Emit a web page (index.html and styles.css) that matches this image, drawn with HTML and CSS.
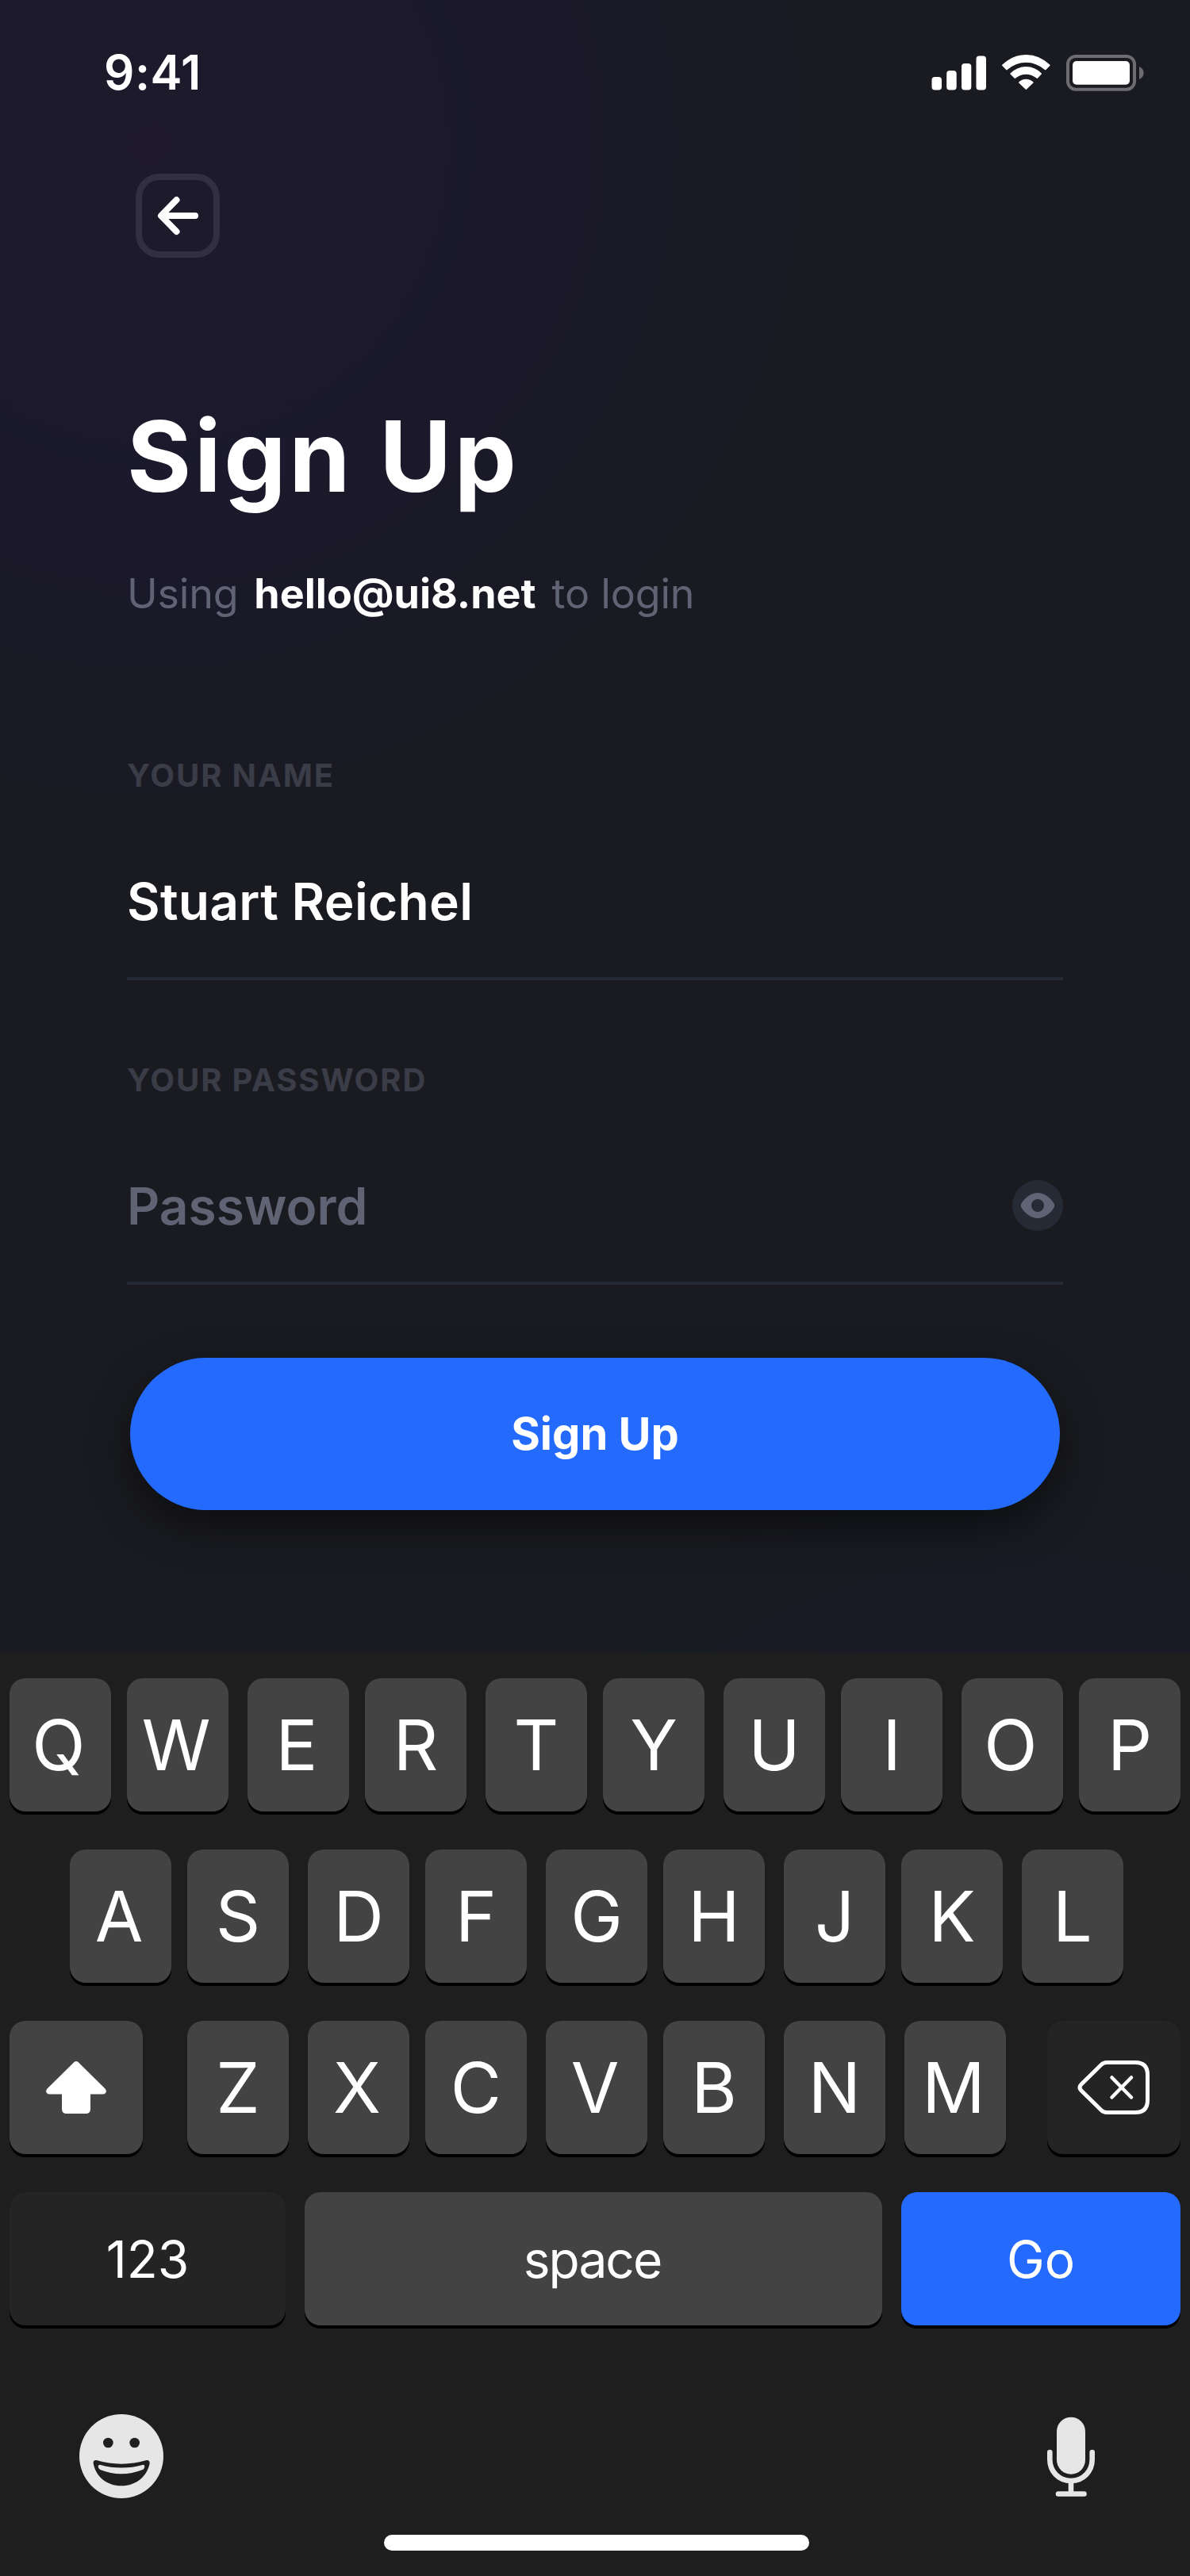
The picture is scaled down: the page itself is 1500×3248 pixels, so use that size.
FILE: index.html
```html
<!DOCTYPE html>
<html lang="en">
<head>
<meta charset="utf-8">
<title>Sign Up</title>
<link rel="stylesheet" href="styles.css">
</head>
<body>
<div class="screen">
  <header class="status">
    <span class="time">9:41</span>
    <div class="status-icons">
      <svg width="70" height="48" viewBox="0 0 70 48" fill="#fff">
        <rect x="0.5" y="29" width="12.5" height="16.5" rx="4"/>
        <rect x="19.2" y="21" width="12.5" height="24.5" rx="4"/>
        <rect x="38" y="12" width="12.3" height="33.5" rx="4"/>
        <rect x="56.5" y="2.5" width="12.5" height="43" rx="4"/>
      </svg>
      <svg width="64" height="48" viewBox="366 84 192 144" fill="#fff" stroke="#fff" stroke-width="4" stroke-linejoin="round">
        <path d="M371 127Q410 89 460 89T549 127L533 143Q500 114 460 114T387 143Z"/>
        <path d="M402 159Q427 134 460 134T517 159L502 175Q483 159 460 159T418 175Z"/>
        <path d="M434 192Q445 181 460 181T486 192L460 217Z"/>
      </svg>
      <svg width="98" height="48" viewBox="0 0 98 48">
        <rect x="2" y="3" width="84" height="41.7" rx="10" fill="none" stroke="#6c6c71" stroke-width="4"/>
        <rect x="8" y="9" width="72" height="29.7" rx="5" fill="#fff"/>
        <path d="M92 16C99.500 19 99.500 29 92 32Z" fill="#6c6c71"/>
      </svg>
    </div>
  </header>

  <main class="content">
    <button class="back" aria-label="Back">
      <svg width="56" height="52" viewBox="0 0 56 52" fill="none" stroke="#fff" stroke-width="8" stroke-linecap="round" stroke-linejoin="round">
        <path d="M50 26H8M26.500 6L7 26L26.500 46"/>
      </svg>
    </button>
    <h1 class="title">Sign Up</h1>
    <p class="subtitle"><span>Using</span><strong class="email">hello@ui8.net</strong><span>to login</span></p>

    <section class="field">
      <div class="label">YOUR NAME</div>
      <div class="value filled">Stuart Reichel</div>
    </section>
    <section class="field">
      <div class="label">YOUR PASSWORD</div>
      <div class="value placeholder"><span>Password</span>
        <svg class="eye" width="64" height="64" viewBox="0 0 64 64">
          <circle cx="32" cy="32" r="32" fill="#262a34"/>
          <path d="M32 16C44 16 53.300 28.500 53.300 32S44 48 32 48S10.700 35.500 10.700 32S20 16 32 16Z" fill="#606374"/>
          <circle cx="32" cy="32" r="8" fill="#262a34"/>
        </svg>
      </div>
    </section>
    <button class="submit">Sign Up</button>
  </main>

  <footer class="keyboard">
    <div class="row top">
      <span class="key lean">Q</span><span class="key lean">W</span><span class="key lean">E</span><span class="key">R</span><span class="key">T</span><span class="key">Y</span><span class="key">U</span><span class="key">I</span><span class="key lean">O</span><span class="key">P</span>
    </div>
    <div class="row middle">
      <span class="key lean">A</span><span class="key">S</span><span class="key">D</span><span class="key">F</span><span class="key">G</span><span class="key">H</span><span class="key">J</span><span class="key">K</span><span class="key">L</span>
    </div>
    <div class="row bottom">
      <span class="key wide">
        <svg width="76" height="68" viewBox="0 0 76 68" fill="#fff">
          <path d="M35.500 2Q38 0 40.500 2L74.500 35.500Q77 38.500 75 41Q74 42.500 71 42.500H56V61Q56 67 50 67H26Q20 67 20 61V42.500H5Q2 42.500 1 41Q-1 38.500 1.500 35.500Z"/>
        </svg>
      </span>
      <span class="letters">
        <span class="key">Z</span><span class="key lean">X</span><span class="key">C</span><span class="key lean">V</span><span class="key">B</span><span class="key">N</span><span class="key lean">M</span>
      </span>
      <span class="key wide dark">
        <svg width="92" height="70" viewBox="0 0 92 70" fill="none" stroke="#fff" stroke-width="5" stroke-linecap="round" stroke-linejoin="round">
          <path d="M37 3.500H73Q88.500 3.500 88.500 19V51Q88.500 66.500 73 66.500H37Q33 66.500 30 63.500L5 39Q1 35 5 31L30 6.500Q33 3.500 37 3.500Z"/>
          <path d="M43.500 22.500L68 47.500M68 22.500L43.500 47.500" stroke-width="4.500"/>
        </svg>
      </span>
    </div>
    <div class="row actions">
      <span class="key dark num">123</span><span class="key space">space</span><span class="key go">Go</span>
    </div>
    <div class="tools">
      <svg width="106" height="106" viewBox="120 132 318 318">
        <circle cx="279" cy="291" r="159" fill="#e6e6e6"/>
        <g fill="#1f1f1f">
          <circle cx="229" cy="240" r="19"/>
          <circle cx="329" cy="240" r="19"/>
          <path d="M185 306Q279 334 374 306Q386 304 386 318C376 368 334 403 279 403S182 368 173 318Q172 304 185 306Z"/>
        </g>
        <path d="M198 323Q279 346 361 323Q367 323 367 330Q366 339 359 342Q279 374 199 342Q191 337 191 329Q192 323 198 323Z" fill="#e6e6e6"/>
      </svg>
      <svg width="62" height="102" viewBox="0 0 62 102" fill="#e6e6e6">
        <rect x="13" y="0.700" width="36" height="72" rx="18"/>
        <path d="M4.300 45V54C4.300 69 15.500 81 31 81S57.700 69 57.700 54V45M31 81V97M15 97.500H47.500" fill="none" stroke="#e6e6e6" stroke-width="6.600" stroke-linecap="round"/>
      </svg>
    </div>
    <div class="home"></div>
  </footer>
</div>
</body>
</html>
```
FILE: styles.css
```css
* { box-sizing: border-box; }
body { margin: 0; background: #1a1b20; }
.screen {
  width: 1500px;
  height: 3248px;
  overflow: hidden;
  display: flex;
  flex-direction: column;
  color: #fff;
  font-family: Inter, "Liberation Sans", sans-serif;
  background:
    radial-gradient(circle at 190px 180px, #1e1a2b 0, #1b192c 400px, #1a1928 600px, #191a23 800px, rgba(25, 27, 34, .8) 880px, rgba(26, 27, 32, 0) 980px),
    radial-gradient(circle at 1300px 2700px, #1b1931 0, #1a1a2b 500px, #1a1a25 680px, rgba(24, 27, 35, .8) 760px, rgba(26, 27, 32, 0) 860px),
    #1a1b20;
}

.status {
  display: flex;
  justify-content: space-between;
  height: 219px;
  padding: 54px 58px 0 131px;
}
.time { font-size: 60px; line-height: 74px; font-weight: 600; letter-spacing: .5px; }
.status-icons { display: flex; gap: 18px; padding-top: 14px; }
svg { display: block; flex: none; }

.content { flex: 1; padding: 0 160px; }
.back {
  display: flex;
  align-items: center;
  justify-content: center;
  width: 106px;
  height: 106px;
  margin: 0 0 0 11px;
  padding: 0;
  border: 8px solid #322f40;
  border-radius: 30px;
  background: none;
}
.title {
  margin: 175px 0 0;
  font-size: 124px;
  line-height: 150px;
  font-weight: 700;
  letter-spacing: 3.7px;
}
.subtitle {
  display: flex;
  gap: 20px;
  margin: 67px 0 71px;
  font-size: 52px;
  line-height: 64px;
  letter-spacing: -.2px;
  color: #606374;
}
.email { color: #fff; font-weight: 700; letter-spacing: 0; }
.field { padding-top: 102px; }
.label {
  font-size: 40px;
  line-height: 48px;
  font-weight: 700;
  letter-spacing: 1.85px;
  color: #3a3c47;
}
.value {
  display: flex;
  align-items: center;
  justify-content: space-between;
  height: 234px;
  padding: 95px 0 55px;
  border-bottom: 4px solid #262a34;
  font-size: 64px;
  line-height: 80px;
  font-weight: 600;
}
.filled { letter-spacing: .3px; }
.placeholder { color: #606374; }
.eye { margin-bottom: 2px; }
.submit {
  display: block;
  width: 1172px;
  height: 192px;
  margin: 92px 0 0 4px;
  padding: 0;
  border: 0;
  border-radius: 96px;
  background: #246bfd;
  box-shadow: 0 20px 50px rgba(0, 0, 0, .5);
  color: #fff;
  font: 700 56px/68px Inter, sans-serif;
}

.keyboard {
  height: 1164px;
  padding: 32px 12px 0;
  background: rgba(31, 31, 31, .95);
}
.row { display: flex; height: 168px; margin-bottom: 48px; }
.key {
  display: flex;
  align-items: center;
  justify-content: center;
  flex: none;
  width: 128px;
  height: 168px;
  border-radius: 20px;
  background: #434343;
  box-shadow: 0 4px 0 #000;
  font-size: 88px;
  line-height: 106px;
}
.lean { padding-right: 4px; }
.row .key + .key { margin-left: 20px; }
.row .key:nth-child(odd):not(:first-child) { margin-left: 24px; }
.middle { padding-left: 76px; }
.letters { display: flex; margin: 0 52px 0 56px; }
.row .letters .key:nth-child(even) { margin-left: 24px; }
.row .letters .key:nth-child(odd):not(:first-child) { margin-left: 20px; }
.row .letters .key:last-child:not(:first-child) { margin-left: 24px; }
.row .key.wide:nth-child(n) { width: 168px; margin-left: 0; }
.row .key.dark { background: #242424; }
.actions .key { padding-top: 2px; font-size: 64px; line-height: 78px; }
.row .key.num { width: 348px; }
.row .key.space { width: 728px; margin-left: 24px; padding-right: 3px; letter-spacing: -2px; }
.row .key.go { width: 352px; background: #246bfd; }
.tools {
  display: flex;
  justify-content: space-between;
  align-items: flex-start;
  height: 152px;
  margin-top: 112px;
  padding: 0 107px 0 88px;
}
.tools svg:last-child { margin-top: 3px; }
.home {
  width: 536px;
  height: 20px;
  margin-left: 472px;
  border-radius: 10px;
  background: #fff;
}
```
